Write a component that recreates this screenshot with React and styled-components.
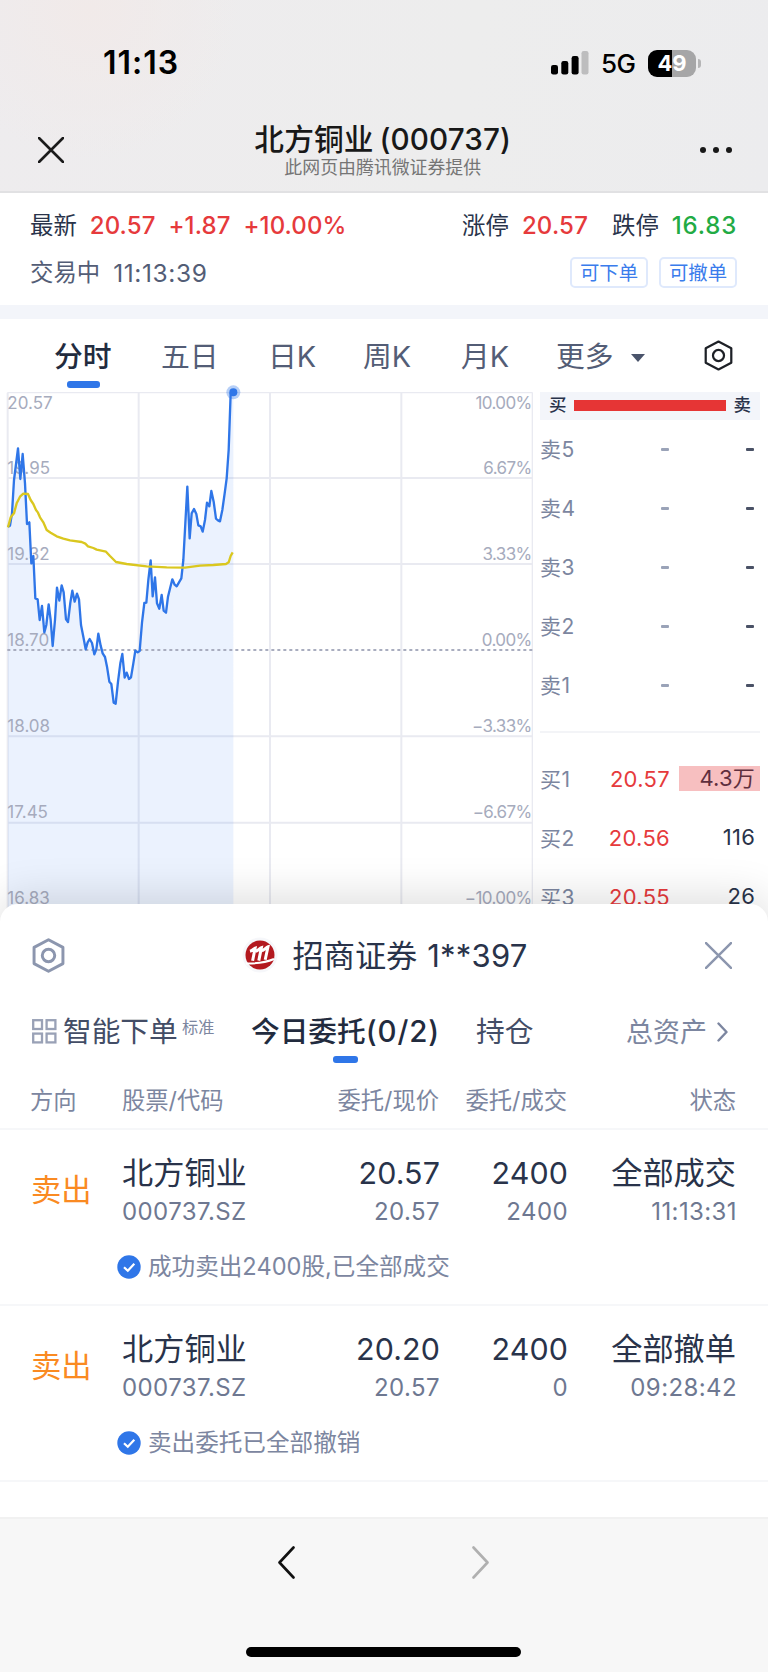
import React from "react";
import styled, { createGlobalStyle } from "styled-components";

const pricePoints =
  "24,440 30,437 36,400 42,300 54,205 61,297 68,222 75,310 81,432 88,427 94,550 100,528 106,655 113,658 119,720 126,678 133,757 139,735 146,673 152,720 158,798 165,720 171,623 178,662 185,616 191,637 198,718 204,726 211,668 217,632 224,665 231,641 237,658 243,735 250,770 257,808 263,787 269,777 276,789 283,823 289,808 295,761 302,797 308,820 315,831 321,860 328,905 334,912 341,968 347,971 354,905 361,850 367,822 374,893 380,878 387,897 393,892 400,850 406,812 413,817 419,813 426,728 433,669 439,668 445,600 452,541 458,649 465,592 471,670 478,686 485,645 491,692 498,698 504,650 511,622 517,598 524,614 530,619 537,607 544,595 550,540 556,430 562,320 569,475 575,400 582,387 589,402 595,436 602,439 608,455 615,420 621,368 628,379 634,333 641,365 648,416 654,421 660,424 667,390 674,340 680,295 686,210 692,40 700,37";

const averagePoints =
  "24,442 32,412 42,400 50,370 60,350 70,341 84,342 92,360 100,372 108,390 114,398 120,412 130,427 140,450 152,458 170,469 190,476 210,481 245,486 256,491 264,499 280,504 290,509 318,515 330,528 348,546 380,552 440,559 500,562 555,563 600,557 640,555 678,552 686,547 692,528 698,517";

const axisLabels = [
  { y: 86, price: "20.57", percent: "10.00%" },
  { y: 281, price: "19.95", percent: "6.67%" },
  { y: 540, price: "19.32", percent: "3.33%" },
  { y: 798, price: "18.70", percent: "0.00%" },
  { y: 1056, price: "18.08", percent: "−3.33%" },
  { y: 1314, price: "17.45", percent: "−6.67%" },
  { y: 1573, price: "16.83", percent: "−10.00%" },
];

const sellLevels = ["卖5", "卖4", "卖3", "卖2", "卖1"];

const buyLevels = [
  { name: "买1", price: "20.57", amount: "4.3万", highlight: true },
  { name: "买2", price: "20.56", amount: "116" },
  { name: "买3", price: "20.55", amount: "26" },
];

const orders = [
  {
    price: "20.57",
    total: "2400",
    done: "2400",
    status: "全部成交",
    time: "11:13:31",
    message: "成功卖出2400股,已全部成交",
  },
  {
    price: "20.20",
    total: "2400",
    done: "0",
    status: "全部撤单",
    time: "09:28:42",
    message: "卖出委托已全部撤销",
  },
];

export default function App() {
  return (
    <Page>
      <GlobalStyle />
      <Header>
        <StatusBar>
          <Clock>11:13</Clock>
          <StatusIcons>
            <SignalIcon />
            <Network>5G</Network>
            <Battery>
              <BatteryBody>49</BatteryBody>
              <BatteryCap />
            </Battery>
          </StatusIcons>
        </StatusBar>
        <TitleBar>
          <CrossIcon size={26} color="#1a1a1a" width={2.6} />
          <TitleGroup>
            <Title>北方铜业 (000737)</Title>
            <Subtitle>此网页由腾讯微证券提供</Subtitle>
          </TitleGroup>
          <Dots>
            <i />
            <i />
            <i />
          </Dots>
        </TitleBar>
      </Header>
      <Quote>
        <QuoteRow>
          <QuoteLabel>最新</QuoteLabel>
          <QuoteValue $spacing={0.1}>20.57</QuoteValue>
          <QuoteValue $spacing={0.1}>+1.87</QuoteValue>
          <QuoteValue $spacing={0.1}>+10.00%</QuoteValue>
          <Spacer />
          <QuoteLabel>涨停</QuoteLabel>
          <QuoteValue $spacing={0.2}>20.57</QuoteValue>
          <QuoteLabel $gap={24}>跌停</QuoteLabel>
          <QuoteValue $spacing={0.8} $green>
            16.83
          </QuoteValue>
        </QuoteRow>
        <QuoteRow>
          <QuoteLabel $muted>交易中</QuoteLabel>
          <TradingTime>11:13:39</TradingTime>
          <Spacer />
          <Tag>可下单</Tag>
          <Tag>可撤单</Tag>
        </QuoteRow>
      </Quote>
      <ChartTabs>
        <ChartTab $width={107} $active>
          分时
        </ChartTab>
        <ChartTab $width={107}>五日</ChartTab>
        <ChartTab $width={95}>日K</ChartTab>
        <ChartTab $width={98}>周K</ChartTab>
        <ChartTab $width={95}>月K</ChartTab>
        <ChartTab $width={73}>更多</ChartTab>
        <Caret />
        <HexagonIcon size={31} color="#1d2026" width={2.3} />
      </ChartTabs>
      <Market>
        <MinuteChart />
        <OrderBook />
      </Market>
      <Sheet>
        <SheetHeader>
          <HexagonIcon size={35} color="#8c96ae" width={2.7} />
          <Broker>
            <BrokerLogo />
            <BrokerName>招商证券</BrokerName>
            <BrokerAccount>1**397</BrokerAccount>
          </Broker>
          <CrossIcon size={27} color="#8c96ae" width={2.4} />
        </SheetHeader>
        <SheetTabs>
          <GridIcon />
          <SmartTab>智能下单</SmartTab>
          <Mode>标准</Mode>
          <TodayTab>
            今日委托<Count>(0/2)</Count>
          </TodayTab>
          <HoldTab>持仓</HoldTab>
          <Assets>总资产</Assets>
          <ChevronIcon width={11} height={20} color="#7c86a0" stroke={2.4} />
        </SheetTabs>
        <TableHead>
          <span>方向</span>
          <span>股票/代码</span>
          <Right>委托/现价</Right>
          <Right>委托/成交</Right>
          <Right>状态</Right>
        </TableHead>
        {orders.map((order) => (
          <Order key={order.time} order={order} />
        ))}
      </Sheet>
      <BottomBar>
        <BottomNav>
          <ChevronIcon
            width={17}
            height={33}
            color="#111"
            stroke={2.6}
            flipped
          />
          <ChevronIcon width={17} height={33} color="#b0b0b0" stroke={2.6} />
        </BottomNav>
        <HomeIndicator />
      </BottomBar>
    </Page>
  );
}

function Order({ order }) {
  return (
    <OrderWrapper>
      <OrderGrid>
        <Direction>卖出</Direction>
        <div>
          <StockName>北方铜业</StockName>
          <Minor>000737.SZ</Minor>
        </div>
        <Right>
          <Major>{order.price}</Major>
          <Minor>20.57</Minor>
        </Right>
        <Right>
          <Major>{order.total}</Major>
          <Minor>{order.done}</Minor>
        </Right>
        <Right>
          <StockName>{order.status}</StockName>
          <Minor>{order.time}</Minor>
        </Right>
      </OrderGrid>
      <Message>
        <CheckIcon />
        <MessageText>{order.message}</MessageText>
      </Message>
    </OrderWrapper>
  );
}

function MinuteChart() {
  return (
    <ChartSvg viewBox="0 36 1605 1590">
      <g stroke="#e9eaf1" strokeWidth="6" fill="none">
        <path d="M22 38H1598" strokeWidth="4" />
        <path d="M22 294H1598M22 552H1598M22 1069H1598M22 1328H1598M22 1586H1598" />
        <path d="M23 38V1626M416 38V1626M810 38V1626M1204 38V1626" />
        <path d="M1597 38V1626" strokeWidth="4" />
      </g>
      <polygon
        points={`24,1626 ${pricePoints} 700,1626`}
        fill="#2f78f5"
        fillOpacity="0.095"
      />
      <path
        d="M22 810H1598"
        stroke="#a9adbf"
        strokeWidth="6"
        strokeDasharray="9 9"
      />
      {axisLabels.map((label) => (
        <g key={label.price}>
          <AxisText x="22" y={label.y}>
            {label.price}
          </AxisText>
          <AxisText x="1595" y={label.y} textAnchor="end" $tight>
            {label.percent}
          </AxisText>
        </g>
      ))}
      <g fill="none" strokeWidth="7" strokeLinejoin="round">
        <polyline points={pricePoints} stroke="#2f76e8" />
        <polyline points={averagePoints} stroke="#dac71f" />
      </g>
      <circle cx="700" cy="37" r="21" fill="#2f76e8" fillOpacity="0.35" />
      <circle cx="700" cy="37" r="12" fill="#2f76e8" />
    </ChartSvg>
  );
}

function OrderBook() {
  return (
    <Book>
      <BookHeader>
        <span>买</span>
        <Ratio />
        <span>卖</span>
      </BookHeader>
      {sellLevels.map((name) => (
        <BookRow key={name}>
          <LevelName>{name}</LevelName>
          <Dash $color="#9aa3b8" />
          <Dash $color="#4a5266" />
        </BookRow>
      ))}
      <BookDivider />
      {buyLevels.map((level) => (
        <BookRow key={level.name}>
          <LevelName>{level.name}</LevelName>
          <LevelPrice>{level.price}</LevelPrice>
          <LevelAmount $highlight={level.highlight}>{level.amount}</LevelAmount>
        </BookRow>
      ))}
    </Book>
  );
}

function SignalIcon() {
  return (
    <svg width="38" height="24" viewBox="0 0 38 24">
      <rect x="0" y="14" width="7" height="9.5" rx="2.2" />
      <rect x="10.3" y="10" width="7" height="13.5" rx="2.2" />
      <rect x="20.6" y="5" width="7" height="18.5" rx="2.2" />
      <rect x="30.5" y="0" width="7" height="23.5" rx="2.2" fill="#bdbdbe" />
    </svg>
  );
}

function CrossIcon({ size, color, width }) {
  return (
    <svg width={size} height={size} viewBox="0 0 26 26">
      <path
        d="M1 1L25 25M25 1L1 25"
        stroke={color}
        strokeWidth={width}
        strokeLinecap="round"
      />
    </svg>
  );
}

function HexagonIcon({ size, color, width }) {
  return (
    <svg width={size} height={size} viewBox="0 0 32 32">
      <g fill="none" stroke={color} strokeWidth={width} strokeLinejoin="round">
        <path d="M16 1.6L29.2 8.6V23.4L16 30.4L2.8 23.4V8.6Z" />
        <circle cx="16" cy="16" r="5.7" />
      </g>
    </svg>
  );
}

function ChevronIcon({ width, height, color, stroke, flipped }) {
  const path = flipped
    ? `M${width - 1.5} 1.5L1.5 ${height / 2}L${width - 1.5} ${height - 1.5}`
    : `M1.5 1.5L${width - 1.5} ${height / 2}L1.5 ${height - 1.5}`;
  return (
    <svg width={width} height={height}>
      <path
        d={path}
        fill="none"
        stroke={color}
        strokeWidth={stroke}
        strokeLinecap="round"
        strokeLinejoin="round"
      />
    </svg>
  );
}

function GridIcon() {
  return (
    <svg width="25" height="25" viewBox="0 0 25 25">
      <g fill="none" stroke="#99a1b6" strokeWidth="2.3">
        <rect x="1.2" y="1.2" width="8.8" height="8.8" />
        <rect x="14.6" y="1.2" width="8.8" height="8.8" />
        <rect x="1.2" y="14.6" width="8.8" height="8.8" />
        <rect x="14.6" y="14.6" width="8.8" height="8.8" />
      </g>
    </svg>
  );
}

function CheckIcon() {
  return (
    <svg width="24" height="24" viewBox="0 0 24 24">
      <circle cx="12" cy="12" r="11.7" fill="#2f76e8" />
      <path
        d="M7 12.2L10.8 15.8L17.3 8.8"
        fill="none"
        stroke="#fff"
        strokeWidth="2.2"
      />
    </svg>
  );
}

function BrokerLogo() {
  return (
    <svg width="36" height="36" viewBox="0 0 36 36">
      <circle cx="18" cy="18" r="17.5" fill="#f6f7fa" />
      <circle cx="18" cy="18" r="14.5" fill="#b3191f" />
      <g fill="none" stroke="#fff">
        <path
          d="M8 14.2C10.2 13.6 12 11.6 13.1 11.2L10.6 23.8M13.8 14.4C16 13.8 18 11 19.4 10.6L16.8 23.6M20 13.8C22.2 13 24.4 10.2 26 9.8L23.2 22.8"
          strokeWidth="3"
        />
        <path d="M4 26.4C12 26.6 24 25.4 32 22" strokeWidth="2" />
      </g>
    </svg>
  );
}

const GlobalStyle = createGlobalStyle`
  body {
    margin: 0;
    background: #fff;
  }

  * {
    box-sizing: border-box;
  }

  svg {
    display: block;
    flex: none;
  }
`;

const Page = styled.div`
  font-family: Inter, "Noto Sans CJK SC", sans-serif;
  width: 768px;
  height: 1672px;
  overflow: hidden;
  white-space: nowrap;
  color: #29334a;
  background: #fff;
  flex-direction: column;
  display: flex;
`;

const Header = styled.header`
  height: 193px;
  flex: none;
  border-bottom: 2px solid #e1e1e3;
  background: radial-gradient(
      circle at 90px 10px,
      #f1eae9 0,
      rgba(241, 234, 233, 0) 150px
    ),
    linear-gradient(100deg, #eeecee, #ededed 60%, #ececee);
`;

const StatusBar = styled.div`
  height: 112px;
  padding: 14px 67px 0 103px;
  justify-content: space-between;
  align-items: center;
  display: flex;
  color: #000;
`;

const Clock = styled.span`
  font-size: 32px;
  font-weight: 600;
  line-height: 40px;
  letter-spacing: 1px;
`;

const StatusIcons = styled.div`
  align-items: center;
  display: flex;
`;

const Network = styled.span`
  font-size: 26px;
  font-weight: 500;
  letter-spacing: -0.6px;
  width: 47px;
  margin-left: 12px;
`;

const Battery = styled.div`
  align-items: center;
  gap: 2px;
  display: flex;
`;

const BatteryBody = styled.span`
  width: 48px;
  height: 27px;
  line-height: 27px;
  border-radius: 9px;
  font-size: 22px;
  font-weight: 700;
  text-align: center;
  color: #fff;
  background: linear-gradient(90deg, #000 50%, #a6a6a7 50%);
`;

const BatteryCap = styled.span`
  width: 3px;
  height: 9px;
  border-radius: 0 3px 3px 0;
  background: #b5b5b6;
`;

const TitleBar = styled.div`
  height: 78px;
  padding: 0 36px 2px 38px;
  justify-content: space-between;
  align-items: center;
  display: flex;
`;

const TitleGroup = styled.div`
  margin-left: 2px;
  text-align: center;
`;

const Title = styled.div`
  margin-top: -1px;
  padding-bottom: 1px;
  font-size: 29.7px;
  font-weight: 500;
  line-height: 36px;
  letter-spacing: 0.1px;
  word-spacing: -2px;
  color: #181818;
`;

const Subtitle = styled.div`
  font-size: 17.9px;
  line-height: 20px;
  color: #757575;
`;

const Dots = styled.div`
  gap: 6.5px;
  display: flex;

  i {
    width: 6.5px;
    height: 6.5px;
    border-radius: 50%;
    background: #181818;
  }
`;

const Quote = styled.section`
  height: 126px;
  flex: none;
  padding: 9px 31px 0 30px;
  border-bottom: 14px solid #f3f5fa;
`;

const QuoteRow = styled.div`
  height: 47px;
  align-items: center;
  display: flex;
`;

const Spacer = styled.span`
  flex: 1;
`;

const QuoteLabel = styled.span`
  font-size: 23.4px;
  padding-bottom: 4px;
  margin-left: ${({ $gap }) => $gap || 0}px;
  color: ${({ $muted }) => ($muted ? "#535d76" : "#29334a")};
`;

const QuoteValue = styled.span`
  font-size: 24px;
  font-weight: 500;
  margin-left: 13px;
  letter-spacing: ${({ $spacing }) => $spacing}px;
  color: ${({ $green }) => ($green ? "#22ab44" : "#e63a3c")};
`;

const TradingTime = styled.span`
  font-size: 24.5px;
  margin-left: 13px;
  letter-spacing: 0.6px;
  color: #535d76;
`;

const Tag = styled.span`
  width: 78px;
  height: 31px;
  line-height: 28px;
  margin-left: 11px;
  border: 2px solid #dfe9fc;
  border-radius: 5px;
  text-align: center;
  font-size: 19.4px;
  color: #3a7cec;
`;

const ChartTabs = styled.nav`
  height: 73px;
  flex: none;
  padding: 0 34px 0 54px;
  align-items: center;
  display: flex;
`;

const ChartTab = styled.span`
  position: relative;
  width: ${({ $width }) => $width}px;
  padding-bottom: 2px;
  font-size: 28.8px;
  font-weight: ${({ $active }) => ($active ? 500 : 400)};
  color: ${({ $active }) => ($active ? "#222b3e" : "#535d76")};

  &::after {
    content: "";
    display: ${({ $active }) => ($active ? "block" : "none")};
    position: absolute;
    left: 13px;
    bottom: -11px;
    width: 33px;
    height: 7px;
    border-radius: 3px;
    background: #2f76e8;
  }
`;

const Caret = styled.span`
  margin: 4px 58px 0 2px;
  border: 7px solid transparent;
  border-top: 8px solid #4a546b;
  border-bottom: 0;
`;

const Market = styled.section`
  height: 530px;
  flex: none;
  display: flex;
`;

const ChartSvg = styled.svg`
  width: 535px;
  height: 530px;
  overflow: visible;
`;

const AxisText = styled.text`
  font-size: 51px;
  letter-spacing: ${({ $tight }) => ($tight ? -1.8 : 0)}px;
  fill: #a6abbd;
`;

const Book = styled.div`
  width: 220px;
  margin-left: 5px;
`;

const BookHeader = styled.div`
  height: 28px;
  padding: 0 9px 1px;
  justify-content: space-between;
  align-items: center;
  display: flex;
  font-size: 17.5px;
  font-weight: 500;
  background: #f3f5fa;

  span {
    line-height: 24px;
    padding-bottom: 2px;
  }
`;

const Ratio = styled.div`
  width: 152px;
  height: 11px;
  background: #e63535;
`;

const BookRow = styled.div`
  height: 58.9px;
  align-items: center;
  display: flex;
  font-size: 22px;
`;

const LevelName = styled.span`
  width: 50px;
  padding-bottom: 2px;
  font-size: 21px;
  letter-spacing: 0.4px;
  color: #7c86a0;
`;

const LevelPrice = styled.span`
  width: 80px;
  font-size: 22px;
  letter-spacing: 0.3px;
  text-align: right;
  color: #e63a3c;
`;

const LevelAmount = styled.span`
  width: 81px;
  height: 25px;
  line-height: 25px;
  margin-left: 9px;
  padding-right: 5px;
  letter-spacing: 0.2px;
  text-align: right;
  color: ${({ $highlight }) => ($highlight ? "#5f2f3e" : "#29334a")};
  background: ${({ $highlight }) => ($highlight ? "#f7bfc0" : "none")};
`;

const Dash = styled.span`
  width: 8px;
  height: 3px;
  margin: 1px 0 0 71px;
  border-radius: 1px;
  background: ${({ $color }) => $color};

  & + & {
    margin-left: 77px;
  }
`;

const BookDivider = styled.div`
  height: 2px;
  margin: 17px 0 16px;
  background: #f3f4f7;
`;

const Sheet = styled.section`
  position: relative;
  height: 613px;
  flex: none;
  margin-top: -18.5px;
  border-radius: 18px 18px 0 0;
  background: #fff;
  box-shadow: 0 -6px 44px rgba(0, 0, 0, 0.14);
`;

const SheetHeader = styled.div`
  height: 103px;
  padding: 0 36px 0 31px;
  justify-content: space-between;
  align-items: center;
  display: flex;
`;

const Broker = styled.div`
  margin-right: 2px;
  align-items: center;
  display: flex;
  font-size: 31.2px;
`;

const BrokerName = styled.span`
  margin-left: 15px;
  padding-bottom: 4px;
`;

const BrokerAccount = styled.span`
  margin-left: 10px;
  font-size: 31px;
  letter-spacing: 0.2px;
`;

const SheetTabs = styled.div`
  height: 50px;
  padding-left: 32px;
  align-items: center;
  display: flex;
  font-size: 28.7px;
`;

const SmartTab = styled.span`
  margin-left: 6px;
  padding-bottom: 4px;
  width: 119px;
  color: #434d66;
`;

const Mode = styled.span`
  width: 69px;
  padding-bottom: 11px;
  font-size: 16.2px;
  color: #7c86a0;
`;

const TodayTab = styled.span`
  position: relative;
  width: 225px;
  padding-bottom: 4px;
  font-weight: 500;
  color: #222b3e;

  &::after {
    content: "";
    position: absolute;
    left: 82px;
    bottom: -9px;
    width: 25px;
    height: 7px;
    border-radius: 3px;
    background: #2f76e8;
  }
`;

const Count = styled.span`
  font-size: 29.5px;
  letter-spacing: 0.9px;
`;

const HoldTab = styled.span`
  width: 150px;
  padding-bottom: 4px;
  color: #434d66;
`;

const Assets = styled.span`
  width: 91px;
  padding-bottom: 2px;
  font-size: 27px;
  color: #7c86a0;
`;

const TableHead = styled.div`
  height: 73px;
  padding: 13px 0 0 30px;
  grid-template-columns: 92px 177px 140px 128px 169px;
  align-items: center;
  display: grid;
  font-size: 23.3px;
  color: #7c86a0;
  border-bottom: 2px solid #f6f7f9;
`;

const Right = styled.div`
  text-align: right;
`;

const OrderWrapper = styled.article`
  height: 176.3px;
  padding-top: 22px;
  border-bottom: 2px solid #f6f7f9;
`;

const OrderGrid = styled.div`
  height: 78px;
  padding-left: 31px;
  grid-template-columns: 91px 177px 140px 128px 169px;
  align-items: center;
  display: grid;
`;

const Direction = styled.div`
  font-size: 30.3px;
  padding-bottom: 5px;
  color: #fa8a22;
`;

const StockName = styled.div`
  font-size: 31.2px;
  line-height: 42px;
`;

const Major = styled.div`
  font-size: 30.4px;
  letter-spacing: 0.1px;
  line-height: 42px;
  margin-right: -1px;
`;

const Minor = styled.div`
  font-size: 24px;
  line-height: 36px;
  letter-spacing: 0.4px;
  margin-right: -1px;
  color: #6e7891;
`;

const Message = styled.div`
  height: 30px;
  margin-top: 22px;
  padding-left: 117px;
  gap: 7px;
  align-items: center;
  display: flex;
`;

const MessageText = styled.span`
  font-size: 23.6px;
  padding-bottom: 3px;
  color: #7c86a0;
`;

const BottomBar = styled.footer`
  position: relative;
  flex: 1;
  border-top: 2px solid #f1f1f1;
  background: #f7f7f7;
  flex-direction: column;
  align-items: center;
  display: flex;
`;

const BottomNav = styled.div`
  width: 211px;
  height: 128px;
  margin-right: 1px;
  padding-top: 27px;
  justify-content: space-between;
  display: flex;
`;

const HomeIndicator = styled.div`
  width: 275px;
  height: 10px;
  margin-right: 2px;
  border-radius: 5px;
  background: #000;
`;
